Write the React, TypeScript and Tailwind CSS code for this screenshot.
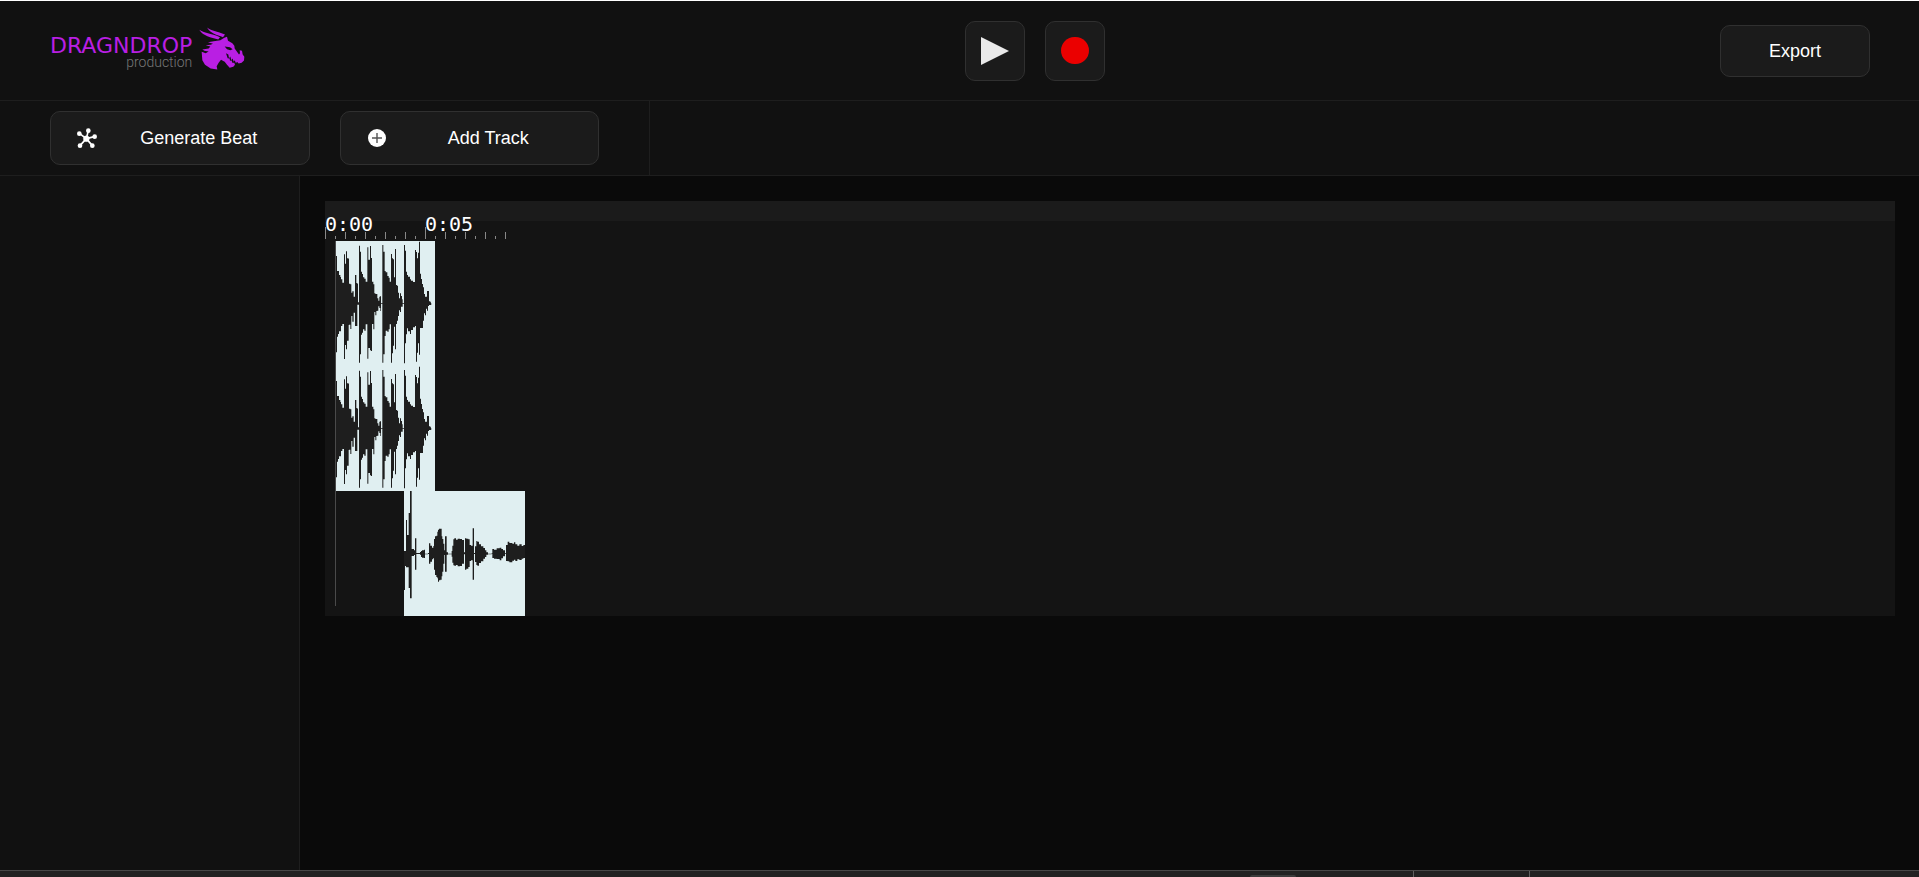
type Step = [x: number, top: number, bottom: number];

const BEAT: Step[] = [
  [0, 12, 371], [3, 45, 334], [6, 90, 287], [9, 90, 279], [12, 102, 271], [16, 108, 271], [18, 115, 255], [22, 125, 249],
  [27, 40, 354], [30, 68, 312], [33, 31, 325], [36, 52, 299], [41, 54, 252], [42, 128, 251], [46, 130, 264],
  [49, 155, 225], [52, 151, 242], [56, 167, 215], [60, 102, 255], [64, 126, 255], [67, 128, 191], [69, 184, 191],
  [72, 14, 365], [75, 32, 340], [78, 92, 281], [81, 99, 275], [84, 109, 265], [88, 113, 269], [92, 122, 250],
  [97, 19, 353], [100, 56, 321], [105, 15, 328], [108, 51, 330], [111, 122, 249], [115, 130, 265], [118, 157, 213],
  [121, 159, 223], [124, 159, 210], [127, 172, 209], [130, 179, 196], [133, 167, 201], [136, 165, 210], [138, 187, 189],
  [142, 12, 365], [145, 32, 340], [149, 90, 285], [152, 94, 269], [157, 105, 272], [161, 110, 265], [164, 122, 250],
  [168, 39, 365], [171, 52, 337], [174, 55, 314], [177, 109, 257], [180, 24, 325], [183, 132, 249], [186, 134, 239],
  [189, 155, 225], [192, 172, 208], [195, 157, 213], [198, 165, 197], [201, 175, 197], [203, 187, 189],
  [207, 12, 367], [210, 29, 307], [213, 92, 280], [216, 102, 262], [219, 107, 271], [225, 115, 279], [228, 119, 267],
  [234, 123, 259], [240, 27, 255], [243, 33, 362], [246, 52, 335], [249, 35, 307], [252, 2, 341], [255, 98, 261],
  [258, 114, 261], [261, 129, 261], [264, 139, 239], [267, 159, 217], [270, 167, 223], [273, 167, 203], [276, 150, 209],
  [279, 150, 195], [282, 181, 192], [286, 184, 192], [288, 188, 188],
];

const VOICE: Step[] = [
  [0, 180, 297], [3, 180, 225], [6, 87, 229], [9, 132, 229], [14, 66, 291], [18, 0, 322], [21, 0, 322], [23, 174, 195],
  [30, 178, 192], [33, 142, 236], [37, 186, 189], [48, 183, 191], [51, 180, 198], [54, 178, 200], [60, 176, 201],
  [63, 188, 188], [72, 186, 189], [75, 157, 218], [79, 164, 212], [84, 170, 205], [88, 165, 201], [90, 144, 236],
  [93, 136, 252], [97, 134, 258], [100, 122, 262], [102, 116, 272], [105, 113, 268], [109, 113, 266], [113, 136, 256],
  [115, 144, 242], [118, 158, 218], [121, 178, 192], [123, 136, 242], [128, 184, 191], [132, 188, 188],
  [143, 180, 197], [145, 164, 215], [148, 145, 223], [151, 142, 224], [156, 146, 222], [161, 143, 226], [168, 144, 225],
  [174, 147, 218], [180, 184, 190], [183, 142, 236], [187, 143, 233], [193, 145, 228], [197, 162, 210], [201, 164, 208],
  [206, 112, 266], [210, 186, 189], [213, 166, 213], [217, 150, 222], [220, 152, 224], [225, 160, 216], [231, 166, 211],
  [238, 171, 203], [243, 178, 198], [247, 184, 191], [252, 188, 188], [263, 187, 188], [265, 174, 201], [270, 176, 203],
  [278, 172, 204], [287, 170, 208], [292, 174, 202], [297, 178, 196], [303, 186, 188],
  [306, 162, 210], [311, 152, 211], [316, 156, 214], [325, 158, 209], [330, 154, 206], [334, 160, 210], [340, 164, 205],
  [346, 160, 207], [353, 165, 203], [358, 162, 201], [363, 162, 201],
];

function outline(steps: Step[], end: number): string {
  return steps
    .map(([x, top, bottom], i) => {
      const next = i + 1 < steps.length ? steps[i + 1][0] : end;
      const b = Math.max(bottom, top + 2);
      return `M${x} ${top}H${next}V${b}H${x}Z`;
    })
    .join("");
}

function Waveform({ steps, width, className }: { steps: Step[]; width: number; className: string }) {
  return (
    <svg viewBox={`0 0 ${width} 375`} className={className} aria-hidden="true">
      <path d={outline(steps, width === 300 ? 291 : width)} fill="#1e1e1e" />
    </svg>
  );
}

function Dragon() {
  return (
    <svg viewBox="26 20 138 128" className="h-[43px] w-[46px]" fill="#b91fe3" aria-hidden="true">
      <path d="M50 21C60 31 82 32 104 42L98 50C80 43 60 39 50 21Z" />
      <path d="M27 28C40 38 62 38 89 50L84 57C62 51 38 47 27 28Z" />
      <path
        fillRule="evenodd"
        d="M70 62L90 59L102 52L110 49L113 61L126 68L132 76L133 84L146 102L149 98L148 89L155 91L157 102L162 109L161 120L154 127L145 129L140 124L137 128L133 119L130 124L127 114L123 119L120 108L116 113L114 102L107 98L112 113L118 114L119 121L124 120L126 127L132 127L134 133L129 139L118 142L110 133L103 124L92 118L85 127L79 137L81 147L61 144L44 133L36 119L34 94L46 98L55 93L42 91L36 87L55 84L60 78L46 74L61 73L68 70L53 65ZM103 78L110 86L120 89L127 86L119 80Z"
      />
    </svg>
  );
}

function Hub() {
  return (
    <svg viewBox="0 0 60 60" className="size-5 shrink-0" fill="#fff" stroke="#fff" aria-hidden="true">
      <path d="M28 32L34 8M28 32L52 26M28 32L46 53M28 32L9 53M28 32L7 16" strokeWidth="5" />
      <circle cx="28" cy="32" r="9" />
      <g stroke="none">
        <circle cx="34" cy="8" r="7" />
        <circle cx="53" cy="26" r="7" />
        <circle cx="46" cy="53" r="7" />
        <circle cx="9" cy="53" r="7" />
        <circle cx="7" cy="17" r="7" />
      </g>
    </svg>
  );
}

const TICKS = Array.from({ length: 19 }, (_, i) => ({
  x: i * 10,
  h: i % 10 === 0 ? 12 : i % 2 === 0 ? 7 : 3,
}));

export default function App() {
  return (
    <div className="flex h-screen flex-col overflow-hidden border-t border-white bg-[#0a0a0a] font-['Liberation_Sans',Arial,sans-serif] text-white">
      <header className="flex h-[100px] shrink-0 items-center justify-between border-b border-[#1e1e1e] bg-[#111] pr-[49px] pl-[50px]">
        <a href="#" className="flex w-[300px] items-start gap-[7px] pb-1">
          <span className="flex flex-col pt-[9px] font-['DejaVu_Sans',sans-serif]">
            <span className="text-[22px] leading-5 text-[#b91fe3]">DRAGNDROP</span>
            <span className="text-right font-['Roboto',sans-serif] text-sm leading-3 font-light text-[#777]">production</span>
          </span>
          <Dragon />
        </a>
        <div className="flex gap-5">
          <button aria-label="Play" className="flex size-[60px] items-center justify-center rounded-[10px] border border-[#303030] bg-[#1b1b1b]">
            <svg viewBox="0 0 28 28" className="size-7" aria-hidden="true">
              <path d="M0 0L28 14L0 28Z" fill="#eaeaea" />
            </svg>
          </button>
          <button aria-label="Record" className="flex size-[60px] items-center justify-center rounded-[10px] border border-[#303030] bg-[#1b1b1b]">
            <span className="h-[27px] w-7 rounded-full bg-[#eb0000]" />
          </button>
        </div>
        <button className="h-[52px] w-[150px] rounded-[10px] border border-[#303030] bg-[#1b1b1b] text-lg">Export</button>
      </header>

      <div className="flex h-[75px] shrink-0 border-b border-[#1e1e1e] bg-[#111]">
        <div className="flex w-[650px] items-center gap-[30px] border-r border-[#1e1e1e] px-[50px]">
          <button className="flex h-[54px] flex-1 items-center rounded-[10px] border border-[#303030] bg-[#1b1b1b] pr-2 pl-[26px] text-lg">
            <Hub />
            <span className="flex-1">Generate Beat</span>
          </button>
          <button className="flex h-[54px] flex-1 items-center rounded-[10px] border border-[#303030] bg-[#1b1b1b] pr-2 pl-[26px] text-lg">
            <svg viewBox="0 0 20 20" className="size-5 shrink-0" aria-hidden="true">
              <circle cx="10" cy="10" r="9" fill="#fff" />
              <path d="M10 5V15M5 10H15" stroke="#555" strokeWidth="1.4" />
            </svg>
            <span className="flex-1">Add Track</span>
          </button>
        </div>
      </div>

      <div className="flex min-h-0 flex-1">
        <aside className="w-[300px] shrink-0 border-r border-[#1e1e1e] bg-[#111]" />
        <main className="min-w-0 flex-1 py-[25px] pr-6 pl-[25px]">
          <section aria-label="Timeline" className="relative bg-[#141414]">
            <div className="h-5 bg-[#1b1b1b]" />
            <div className="relative h-5">
              <svg viewBox="0 0 200 20" className="h-5 w-[200px]" aria-hidden="true">
                {TICKS.map((t) => (
                  <rect key={t.x} x={t.x} y={18 - t.h} width="1" height={t.h} fill="#888" />
                ))}
              </svg>
              <div className="absolute bottom-[5px] left-0 flex font-['DejaVu_Sans_Mono',monospace] text-xl leading-6">
                <span className="w-[100px]">0:00</span>
                <span className="w-[100px]">0:05</span>
              </div>
            </div>
            <div className="ml-[10px] w-[100px] bg-[#e0eff1]">
              <Waveform steps={BEAT} width={300} className="block h-[125px] w-[100px]" />
              <Waveform steps={BEAT} width={300} className="block h-[125px] w-[100px]" />
            </div>
            <div className="ml-[79px] w-[121px] bg-[#e0eff1]">
              <Waveform steps={VOICE} width={363} className="block h-[125px] w-[121px]" />
            </div>
            <div className="absolute top-10 bottom-[10px] left-[10px] w-px bg-[#4a4a4a]" />
          </section>
        </main>
      </div>

      <footer className="flex h-[7px] shrink-0 border-t border-[#484848] bg-[#222]">
        <div className="flex flex-1 items-end justify-end border-r border-[#606060] pr-[117px]">
          <span className="h-[2px] w-[46px] rounded-t-sm bg-[#3c3c3c]" />
        </div>
        <div className="w-[116px] border-r border-[#606060]" />
        <div className="w-[389px]" />
      </footer>
    </div>
  );
}
